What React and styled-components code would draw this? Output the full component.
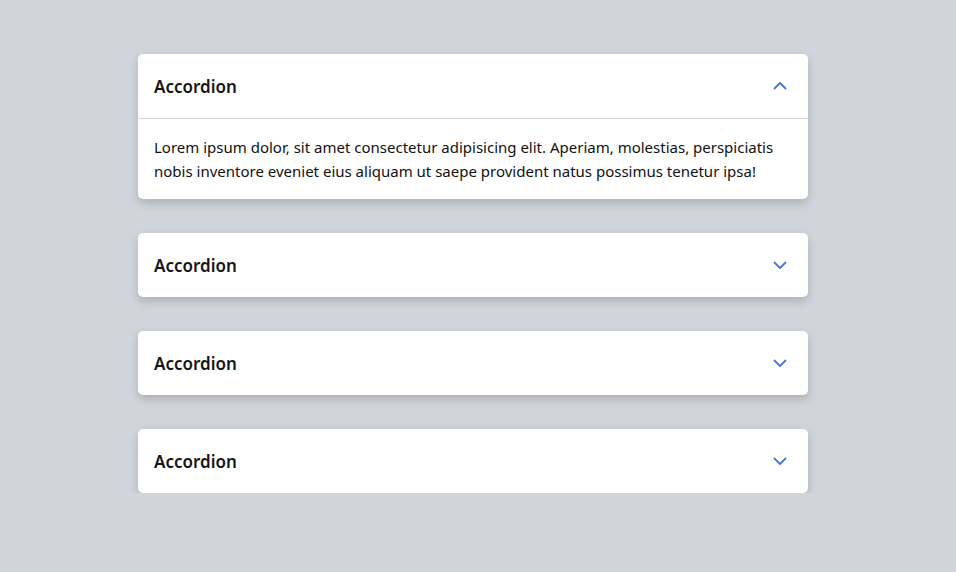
import React, { useState } from "react";
import styled, { createGlobalStyle } from "styled-components";

const GlobalStyle = createGlobalStyle`
  body {
    margin: 0;
    background: #d1d5db;
    font-family: "Noto Sans", "Open Sans", sans-serif;
  }
`;

const Page = styled.div`
  display: flex;
  justify-content: center;
  padding: 54px 10px 0 0;
`;

const List = styled.div`
  width: 670px;
  display: flex;
  flex-direction: column;
  gap: 34px;
`;

const Card = styled.div`
  background: #fff;
  border-radius: 5px;
  box-shadow: 0 4px 10px rgba(0, 0, 0, 0.18);
  overflow: hidden;
`;

const Header = styled.button`
  width: 100%;
  height: 64px;
  display: flex;
  align-items: center;
  justify-content: space-between;
  padding: 0 21px 0 16px;
  border: none;
  background: none;
  cursor: pointer;
  font-family: inherit;
`;

const Title = styled.span`
  font-size: 17px;
  font-weight: 600;
  color: #161616;
`;

const Chevron = styled.svg`
  width: 14px;
  height: 14px;
  transform: rotate(${(p) => (p.$open ? "180deg" : "0deg")});
`;

const Body = styled.div`
  border-top: 1px solid #d4d4d8;
  padding: 16px;
  font-size: 15px;
  line-height: 24px;
  color: #111;
`;

const Item = ({ open, onToggle }) => (
  <Card>
    <Header onClick={onToggle}>
      <Title>Accordion</Title>
      <Chevron $open={open} viewBox="0 0 14 14" fill="none">
        <path d="M1.5 4.5l5.5 5.5 5.5-5.5" stroke="#4a74df" strokeWidth="1.8" strokeLinecap="round" strokeLinejoin="round" />
      </Chevron>
    </Header>
    {open && (
      <Body>
        Lorem ipsum dolor, sit amet consectetur adipisicing elit. Aperiam, molestias, perspiciatis nobis inventore eveniet eius aliquam ut saepe provident natus possimus tenetur ipsa!
      </Body>
    )}
  </Card>
);

export default function App() {
  const [open, setOpen] = useState(0);
  return (
    <>
      <GlobalStyle />
      <Page>
        <List>
          {[0, 1, 2, 3].map((i) => (
            <Item key={i} open={open === i} onToggle={() => setOpen(open === i ? -1 : i)} />
          ))}
        </List>
      </Page>
    </>
  );
}
